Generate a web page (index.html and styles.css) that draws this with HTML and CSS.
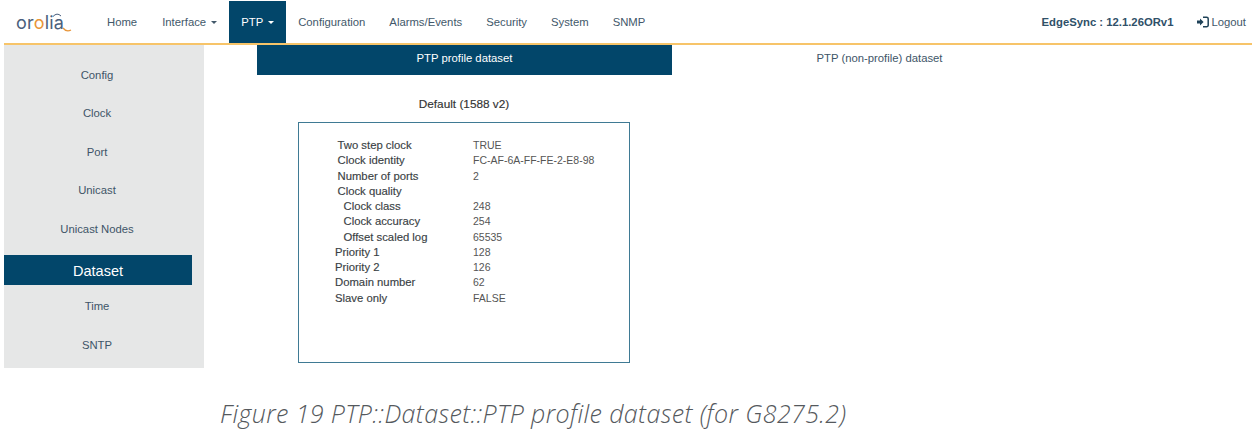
FILE: index.html
```html
<!DOCTYPE html>
<html lang="en">
<head>
<meta charset="utf-8">
<title>PTP Dataset</title>
<link rel="stylesheet" href="styles.css">
</head>
<body>
<div class="app">
  <header class="navbar">
    <a class="brand" href="#">
      <span class="wordmark">or<span class="accent">o</span>lia</span>
      <svg class="brand-marks" width="70" height="32" viewBox="0 0 70 32" aria-hidden="true">
        <path d="M49 15.5 Q53 11 57 15" fill="none" stroke="#4a5f7d" stroke-width="1"/>
        <path d="M59 27 Q62.5 31.5 67 29" fill="none" stroke="#e8963a" stroke-width="1.3"/>
      </svg>
    </a>
    <nav class="menu">
      <a class="first" href="#">Home</a>
      <a class="drop" href="#">Interface <i class="caret"></i></a>
      <a class="drop active" href="#">PTP <i class="caret"></i></a>
      <a href="#">Configuration</a>
      <a href="#">Alarms/Events</a>
      <a href="#">Security</a>
      <a href="#">System</a>
      <a href="#">SNMP</a>
    </nav>
    <div class="nav-right">
      <span class="device">EdgeSync : 12.1.26ORv1</span>
      <a class="logout" href="#">
        <svg width="13" height="12" viewBox="0 0 13 12" aria-hidden="true">
          <path d="M0 4.6h3V2.6L6.6 6 3 9.4V7.4H0z" fill="#1f4258"/>
          <path d="M6 1.2h3.6a1.6 1.6 0 0 1 1.6 1.6v6.4a1.6 1.6 0 0 1-1.6 1.6H6" fill="none" stroke="#1f4258" stroke-width="1.5"/>
        </svg>Logout</a>
    </div>
  </header>
  <div class="body">
    <aside class="sidebar">
      <a href="#">Config</a>
      <a href="#">Clock</a>
      <a href="#">Port</a>
      <a href="#">Unicast</a>
      <a href="#">Unicast Nodes</a>
      <a class="current" href="#">Dataset</a>
      <a href="#">Time</a>
      <a href="#">SNTP</a>
    </aside>
    <main class="content">
      <div class="tabs">
        <a class="tab on" href="#">PTP profile dataset</a>
        <a class="tab" href="#">PTP (non-profile) dataset</a>
      </div>
      <section class="panel">
        <h2>Default (1588 v2)</h2>
        <div class="box">
          <div class="row"><span class="k">Two step clock</span><span>TRUE</span></div>
          <div class="row"><span class="k">Clock identity</span><span>FC-AF-6A-FF-FE-2-E8-98</span></div>
          <div class="row"><span class="k">Number of ports</span><span>2</span></div>
          <div class="row"><span class="k">Clock quality</span><span></span></div>
          <div class="row"><span class="k sub">Clock class</span><span>248</span></div>
          <div class="row"><span class="k sub">Clock accuracy</span><span>254</span></div>
          <div class="row"><span class="k sub">Offset scaled log</span><span>65535</span></div>
          <div class="row"><span class="k top">Priority 1</span><span>128</span></div>
          <div class="row"><span class="k top">Priority 2</span><span>126</span></div>
          <div class="row"><span class="k top">Domain number</span><span>62</span></div>
          <div class="row"><span class="k top">Slave only</span><span>FALSE</span></div>
        </div>
      </section>
    </main>
  </div>
  <p class="caption">Figure 19 PTP::Dataset::PTP profile dataset (for G8275.2)</p>
</div>
</body>
</html>
```
FILE: styles.css
```css
* { box-sizing: border-box; }
html, body { margin: 0; padding: 0; background: #fff; }
body { font-family: "Liberation Sans", Arial, sans-serif; font-size: 11.3px; color: #3b4c58; overflow: hidden; }
a { color: inherit; text-decoration: none; }
.app { width: 1255px; height: 435px; padding: 1px 3px 0 4px; }

.navbar { display: flex; align-items: stretch; height: 44px; border-bottom: 2px solid #f7c469; }
.brand { position: relative; width: 91px; display: block; }
.wordmark { position: absolute; left: 12px; top: 12px; font-family: "Inter", "Liberation Sans", sans-serif; font-size: 18px; font-weight: 400; letter-spacing: 0.2px; line-height: 20px; color: #4a5f7d; }
.accent { color: #e8963a; }
.brand-marks { position: absolute; left: 0; top: 0; }
.menu { display: flex; align-items: stretch; }
.menu a { display: flex; align-items: center; gap: 3px; padding: 0 12px; color: #42586a; white-space: pre; }
.menu a.first { padding-right: 13px; }
.menu a.drop { gap: 2px; }
.menu a.active { background: #02466a; color: #fff; }
.caret { display: inline-block; width: 0; height: 0; border-top: 3px solid currentColor; border-left: 3px solid transparent; border-right: 3px solid transparent; }
.nav-right { margin-left: auto; display: flex; align-items: center; }
.device { font-weight: 700; color: #2f5068; margin-right: 24px; }
.logout { display: flex; align-items: center; gap: 1px; color: #42586a; margin-right: 6px; }

.body { display: flex; align-items: flex-start; }
.sidebar { width: 200px; height: 323px; background: #e6e7e7; padding: 10.4px 14px 0 0; display: flex; flex-direction: column; }
.sidebar a { height: 38.5px; display: flex; align-items: center; justify-content: center; color: #3e5568; }
.sidebar a.current { height: 30px; margin: 7.1px -2px 2px 0; padding-top: 2px; background: #02466a; color: #fff; font-size: 14.5px; }

.content { flex: 1; padding-left: 53px; }
.tabs { display: flex; width: 830px; }
.tab { width: 415px; height: 30px; padding-top: 6px; text-align: center; line-height: 14px; color: #3e5568; }
.tab.on { background: #02466a; color: #fff; }

.panel { width: 332px; margin-left: 41px; }
.panel h2 { margin: 0; padding-top: 22px; height: 47px; font-size: 11.8px; line-height: 15px; font-weight: 400; text-align: center; color: #333; -webkit-text-stroke: 0.15px #333; }
.box { height: 241px; border: 1px solid #3f7a94; padding: 15px 0 0; }
.row { display: grid; grid-template-columns: 174px 1fr; height: 15.28px; line-height: 15.28px; font-size: 10.5px; color: #555; }
.k { color: #3a3f45; padding-left: 38.5px; font-size: 11.3px; -webkit-text-stroke: 0.15px #3a3f45; }
.k.sub { padding-left: 44.5px; }
.k.top { padding-left: 36px; }

.caption { margin: 30px 0 0 216px; font-family: "Open Sans", sans-serif; font-weight: 300; font-style: italic; font-size: 25px; letter-spacing: 0.38px; line-height: 30px; color: #55595d; white-space: nowrap; }
```
